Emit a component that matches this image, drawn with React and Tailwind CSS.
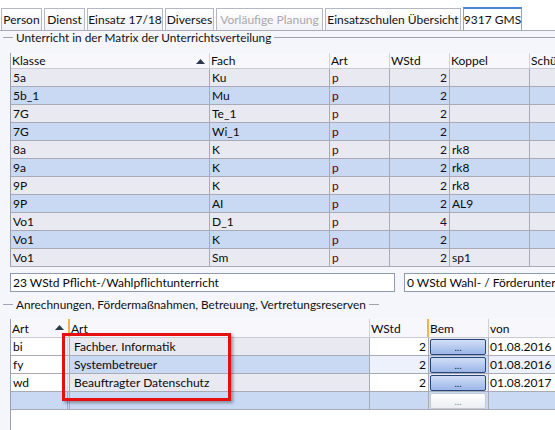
import React from "react"

const font = { fontFamily: 'Lato, "Noto Sans", sans-serif' }

const tabs = [
  { label: "Person", w: "w-[41px]" },
  { label: "Dienst", w: "w-[41px]" },
  { label: "Einsatz 17/18", w: "w-[76px]" },
  { label: "Diverses", w: "w-[49px]" },
  { label: "Vorläufige Planung", w: "w-[107px]", disabled: true },
  { label: "Einsatzschulen Übersicht", w: "w-[136px]" },
  { label: "9317 GMS", w: "w-[59px]", active: true },
]

const rows = [
  ["5a", "Ku", "p", "2", ""],
  ["5b_1", "Mu", "p", "2", ""],
  ["7G", "Te_1", "p", "2", ""],
  ["7G", "Wi_1", "p", "2", ""],
  ["8a", "K", "p", "2", "rk8"],
  ["9a", "K", "p", "2", "rk8"],
  ["9P", "K", "p", "2", "rk8"],
  ["9P", "AI", "p", "2", "AL9"],
  ["Vo1", "D_1", "p", "4", ""],
  ["Vo1", "K", "p", "2", ""],
  ["Vo1", "Sm", "p", "2", "sp1"],
]

const extras = [
  ["bi", "Fachber. Informatik", "2", "01.08.2016"],
  ["fy", "Systembetreuer", "2", "01.08.2016"],
  ["wd", "Beauftragter Datenschutz", "2", "01.08.2017"],
]

function GroupLabel({ text, lineClass }) {
  return (
    <div className="flex items-center h-[15px]">
      <div className="w-[10px] ml-[3px] h-px bg-[#a0a4b0]" />
      <span className="px-[3px] text-[11.8px] text-[#111] leading-none whitespace-nowrap">{text}</span>
      <div className={`h-px bg-[#a0a4b0] ${lineClass}`} />
    </div>
  )
}

function SortArrow() {
  return (
    <svg width="9" height="5" viewBox="0 0 9 5" className="absolute right-[4px] top-[6px]">
      <path d="M0 5 L4.5 0 L9 5 Z" fill="#2d3a4c" />
    </svg>
  )
}

function BemButton({ disabled }) {
  if (disabled) {
    return (
      <div className="mx-[1px] h-[16px] w-[56px] rounded-[2px] border border-[#c8cad2] bg-gradient-to-b from-white to-[#eceef3] flex items-center justify-center text-[10px] text-[#8a8a9a] leading-none">
        ...
      </div>
    )
  }
  return (
    <div className="mx-[1px] h-[16px] w-[56px] rounded-[2px] border border-[#27467a] bg-gradient-to-b from-[#d2def6] to-[#9cb6e8] flex items-center justify-center text-[10px] text-[#1a2540] leading-none">
      ...
    </div>
  )
}

export default function App() {
  return (
    <div className="w-[555px] h-[430px] overflow-hidden bg-[#f5f6fb] relative text-[12px] text-[#0a0a0a]" style={font}>
      {/* Tabs */}
      <div className="h-[31px] bg-white flex items-end gap-[2px] pl-[1px] border-b border-[#a9adb8]">
        {tabs.map(t => (
          <div
            key={t.label}
            className={`${t.w} shrink-0 flex items-center justify-center whitespace-nowrap leading-none text-[12px] border border-b-0 ${
              t.active
                ? "h-[23px] bg-white border-[#8aa4cc] border-t-2 border-t-[#4a86d8]"
                : "h-[22px] bg-gradient-to-b from-white to-[#f1f2f6] border-[#b4b8c4]"
            } ${t.disabled ? "text-[#a8a8ae]" : "text-[#111]"}`}
          >
            {t.label}
          </div>
        ))}
      </div>

      {/* Group 1 */}
      <div className="-mt-[1px]">
        <GroupLabel text="Unterricht in der Matrix der Unterrichtsverteilung" lineClass="flex-1" />
      </div>

      <div className="ml-[10px] mt-[8px] border-l border-[#9aa0ac]">
        <div className="flex h-[16px] bg-[#f8f8fc] border-b border-[#c8cad4]">
          <div className="relative w-[199px] shrink-0 pl-[1px] leading-[16px] border-r border-[#cfd1d9]">
            Klasse
            <SortArrow />
          </div>
          <div className="w-[120px] shrink-0 pl-[1px] leading-[16px] border-r border-[#cfd1d9]">Fach</div>
          <div className="w-[60px] shrink-0 pl-[1px] leading-[16px] border-r border-[#cfd1d9]">Art</div>
          <div className="w-[60px] shrink-0 pl-[1px] leading-[16px] border-r border-[#cfd1d9]">WStd</div>
          <div className="w-[80px] shrink-0 pl-[1px] leading-[16px] border-r border-[#cfd1d9]">Koppel</div>
          <div className="w-[60px] shrink-0 pl-[1px] leading-[16px] whitespace-nowrap">Schüler</div>
        </div>
        {rows.map((r, i) => (
          <div key={i} className={`flex h-[18px] border-b border-[#a8abb5] ${i % 2 ? "bg-[#c9d8f3]" : "bg-[#e9e9f1]"}`}>
            <div className="w-[199px] shrink-0 pl-[2px] leading-[17px] border-r border-[#a8abb5]">{r[0]}</div>
            <div className="w-[120px] shrink-0 pl-[2px] leading-[17px] border-r border-[#a8abb5]">{r[1]}</div>
            <div className="w-[60px] shrink-0 pl-[2px] leading-[17px] border-r border-[#a8abb5] text-[#5c0000]">{r[2]}</div>
            <div className="w-[60px] shrink-0 pr-[2px] text-right leading-[17px] border-r border-[#a8abb5] text-[#10102a]">{r[3]}</div>
            <div className="w-[80px] shrink-0 pl-[2px] leading-[17px] border-r border-[#a8abb5]">{r[4]}</div>
            <div className="w-[60px] shrink-0" />
          </div>
        ))}
      </div>

      {/* Summary boxes */}
      <div className="flex mt-[6px] ml-[10px] gap-[9px]">
        <div className="w-[385px] h-[19px] shrink-0 bg-white border border-[#8d9ab0] pl-[2px] leading-[17px] whitespace-nowrap">
          23 WStd Pflicht-/Wahlpflichtunterricht
        </div>
        <div className="w-[160px] h-[19px] shrink-0 bg-white border border-[#8d9ab0] pl-[2px] leading-[17px] whitespace-nowrap overflow-hidden">
          0 WStd Wahl- / Förderunterricht
        </div>
      </div>

      {/* Group 2 */}
      <div className="mt-[5px]">
        <GroupLabel text="Anrechnungen, Fördermaßnahmen, Betreuung, Vertretungsreserven" lineClass="w-[10px]" />
      </div>

      <div className="ml-[10px] mt-[7px] border-l border-[#9aa0ac] bg-white h-[120px]">
        <div className="flex h-[19px] bg-[#f8f8fc] border-b border-[#c8cad4]">
          <div className="relative w-[57px] shrink-0 pl-[1px] leading-[19px]">
            Art
            <SortArrow />
          </div>
          <div className="w-[2px] shrink-0 bg-[#f5b347]" />
          <div className="w-[300px] shrink-0 pl-[1px] leading-[19px] border-r border-[#cfd1d9]">Art</div>
          <div className="w-[57px] shrink-0 pl-[1px] leading-[19px]">WStd</div>
          <div className="w-[2px] shrink-0 bg-[#f5b347]" />
          <div className="w-[60px] shrink-0 pl-[1px] leading-[19px] border-r border-[#cfd1d9]">Bem</div>
          <div className="w-[70px] shrink-0 pl-[1px] leading-[19px]">von</div>
        </div>
        {extras.map((r, i) => (
          <div key={i} className={`flex h-[18px] border-b border-[#a8abb5] ${i % 2 ? "bg-[#c9d8f3]" : "bg-[#e9e9f1]"}`}>
            <div className="w-[57px] shrink-0 pl-[2px] leading-[17px] bg-white border-r border-[#d8d8e0]">{r[0]}</div>
            <div className="w-[2px] shrink-0 border-r border-[#a8abb5] bg-[#f0f0f4]" />
            <div className="w-[300px] shrink-0 pl-[4px] leading-[17px] border-r border-[#a8abb5]">{r[1]}</div>
            <div className={`w-[59px] shrink-0 pr-[2px] text-right leading-[17px] border-r border-[#a8abb5] ${i % 2 ? "bg-[#ecf1fc]" : "bg-white"}`}>{r[2]}</div>
            <div className="w-[60px] shrink-0 flex items-center border-r border-[#a8abb5]">
              <BemButton />
            </div>
            <div className={`w-[70px] shrink-0 pl-[1px] leading-[17px] ${i % 2 ? "bg-[#ecf1fc]" : "bg-white"}`}>{r[3]}</div>
          </div>
        ))}
        <div className="flex h-[18px] border-b border-[#a8abb5] bg-[#c9d8f3]">
          <div className="w-[57px] shrink-0 border-r border-[#a8abb5]" />
          <div className="w-[2px] shrink-0 border-r border-[#a8abb5]" />
          <div className="w-[300px] shrink-0 border-r border-[#a8abb5]" />
          <div className="w-[59px] shrink-0 border-r border-[#a8abb5]" />
          <div className="w-[60px] shrink-0 flex items-center border-r border-[#a8abb5]">
            <BemButton disabled />
          </div>
          <div className="w-[70px] shrink-0" />
        </div>
      </div>

      {/* Red annotation frame */}
      <div className="absolute left-[62px] top-[333px] w-[169px] h-[68px] border-[3px] border-[#e60f0f] shadow-[2px_2px_3px_rgba(0,0,0,0.35)]" />
    </div>
  )
}
